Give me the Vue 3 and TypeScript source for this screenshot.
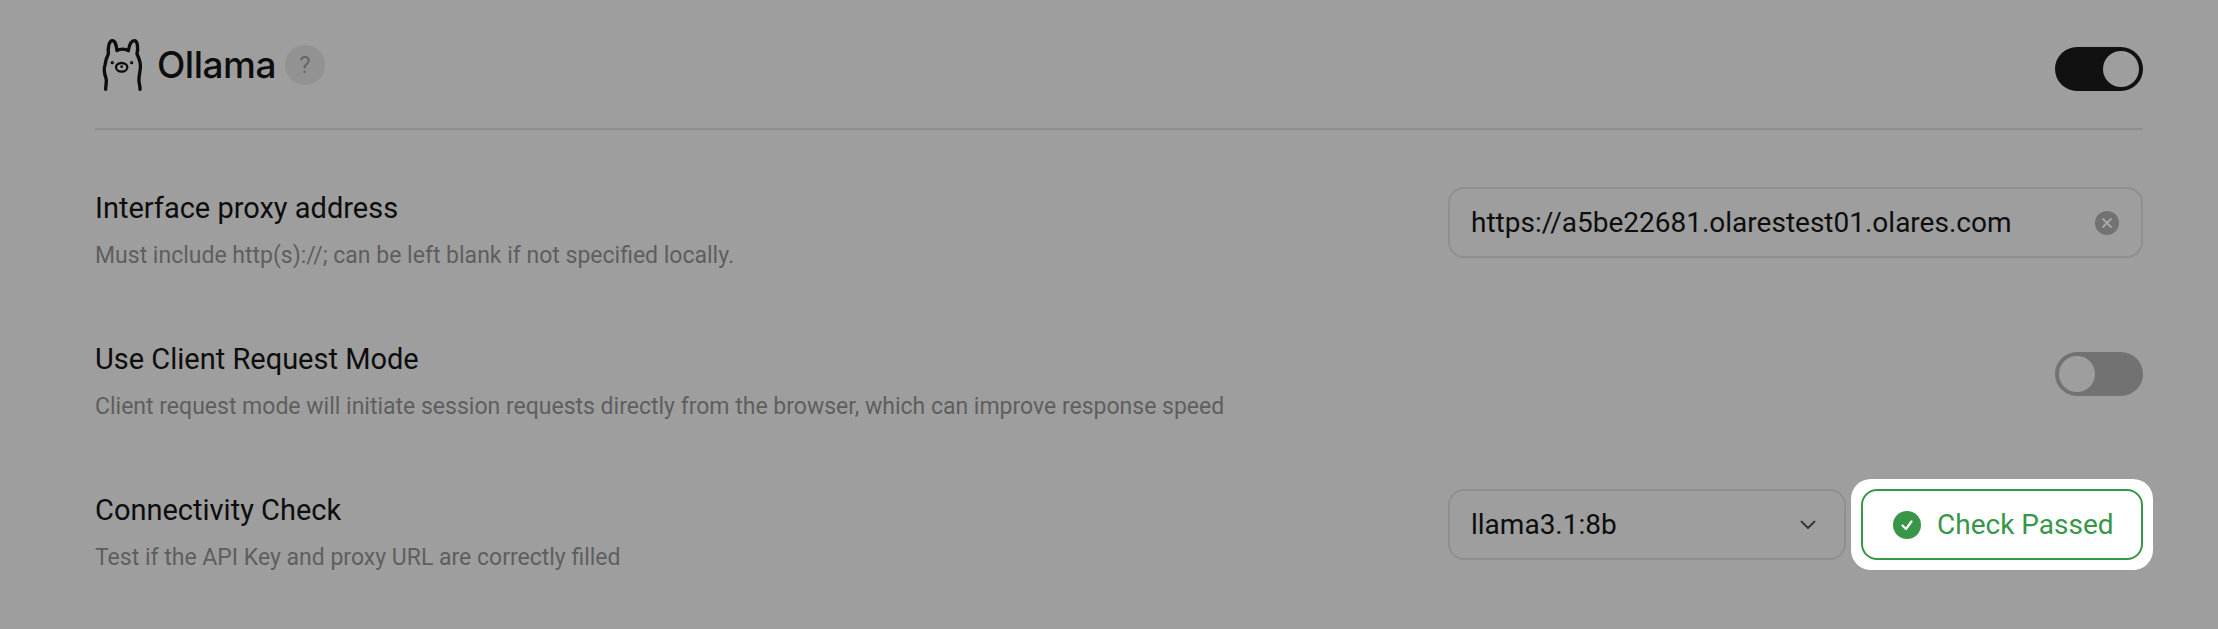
<template>
  <div class="settings">
    <header class="provider-header">
      <div class="provider-title">
        <svg class="llama" viewBox="0 0 180 210" fill="none" stroke="#0d0d0d" stroke-width="10" stroke-linecap="round" stroke-linejoin="round">
          <path d="M32 178C32 165 36 155 33 145C28 130 26 115 30 105C32 90 36 80 40 72C38 55 42 32 52 32C62 32 64 50 66 62C75 56 90 56 100 62C102 50 108 32 118 32C128 32 130 55 126 72C132 85 136 95 136 105C138 120 132 132 132 145C130 158 136 165 135 178" />
          <ellipse cx="80" cy="112" rx="17" ry="13" stroke-width="7" />
          <circle cx="80" cy="110" r="2" stroke-width="4" />
          <circle cx="52" cy="98" r="2" stroke-width="6" />
          <circle cx="110" cy="98" r="2" stroke-width="6" />
        </svg>
        <span class="provider-name">Ollama</span>
        <span class="help-badge">?</span>
      </div>
      <button class="switch on" type="button"><span class="knob"></span></button>
    </header>

    <section class="row">
      <div class="row-text">
        <div class="row-label">Interface proxy address</div>
        <div class="row-desc">Must include http(s)://; can be left blank if not specified locally.</div>
      </div>
      <div class="row-control">
        <div class="field wide">
          <span class="field-value">{{ proxyUrl }}</span>
          <svg class="clear-icon" viewBox="0 0 24 24">
            <circle cx="12" cy="12" r="12" fill="#727272" />
            <path d="M8 8l8 8M16 8l-8 8" stroke="#a8a8a8" stroke-width="1.8" stroke-linecap="round" />
          </svg>
        </div>
      </div>
    </section>

    <section class="row">
      <div class="row-text">
        <div class="row-label">Use Client Request Mode</div>
        <div class="row-desc">Client request mode will initiate session requests directly from the browser, which can improve response speed</div>
      </div>
      <div class="row-control">
        <button class="switch off" type="button"><span class="knob"></span></button>
      </div>
    </section>

    <section class="row">
      <div class="row-text">
        <div class="row-label">Connectivity Check</div>
        <div class="row-desc">Test if the API Key and proxy URL are correctly filled</div>
      </div>
      <div class="row-control">
        <div class="field model">
          <span class="field-value">{{ model }}</span>
          <svg class="chevron" viewBox="0 0 16 10" fill="none" stroke="#333" stroke-width="1.8" stroke-linecap="round" stroke-linejoin="round">
            <path d="M1.5 1.5L8 8l6.5-6.5" />
          </svg>
        </div>
        <div class="spotlight">
          <button class="check-btn" type="button">
            <svg class="check-icon" viewBox="0 0 28 28">
              <circle cx="14" cy="14" r="14" fill="#389648" />
              <path d="M9.5 14.5l3.5 3.5 5.5-7.5" fill="none" stroke="#fff" stroke-width="2.2" stroke-linecap="round" stroke-linejoin="round" />
            </svg>
            <span>Check Passed</span>
          </button>
        </div>
      </div>
    </section>
  </div>
</template>

<script setup lang="ts">
const proxyUrl = 'https://a5be22681.olarestest01.olares.com'
const model = 'llama3.1:8b'
</script>

<style>
html,
body {
  margin: 0;
  background: #9e9e9e;
}
</style>

<style scoped>
.settings {
  box-sizing: border-box;
  width: 2218px;
  height: 629px;
  padding: 0 75px 0 95px;
  background: #9e9e9e;
  font-family: Roboto, "Noto Sans", sans-serif;
  color: #0d0d0d;
  overflow: hidden;
}

.provider-header {
  display: flex;
  justify-content: space-between;
  align-items: flex-start;
  height: 128px;
  margin-bottom: 17px;
  border-bottom: 2px solid #8f8f8f;
}

.provider-title {
  display: flex;
  align-items: center;
  height: 70px;
  margin-top: 30px;
}

.llama {
  width: 60px;
  height: 70px;
}

.provider-name {
  margin: 0 0 1px 2px;
  font-family: Inter, sans-serif;
  font-size: 37px;
  font-weight: 500;
  letter-spacing: -0.5px;
}

.help-badge {
  display: flex;
  align-items: center;
  justify-content: center;
  width: 40px;
  height: 40px;
  margin: 0 0 1px 9px;
  border-radius: 50%;
  background: #929292;
  color: #666;
  font-size: 24px;
}

.switch {
  box-sizing: border-box;
  display: flex;
  align-items: center;
  width: 88px;
  height: 44px;
  padding: 0 4px;
  border: 0;
  border-radius: 22px;
}

.provider-header .switch {
  margin-top: 47px;
}

.switch.on {
  justify-content: flex-end;
  background: #111;
}

.switch.off {
  background: #727272;
}

.knob {
  width: 36px;
  height: 36px;
  border-radius: 50%;
  background: #9e9e9e;
}

.row {
  display: flex;
  justify-content: space-between;
  align-items: flex-start;
  height: 71px;
  padding: 40px 0;
}

.row-label {
  font-size: 29px;
  font-weight: 400;
  line-height: 43px;
}

.row-desc {
  margin-top: 8px;
  color: #5e5e5e;
  font-size: 23px;
  line-height: 36px;
}

.row-control {
  display: flex;
  align-items: center;
  height: 71px;
}

.field {
  box-sizing: border-box;
  display: flex;
  align-items: center;
  justify-content: space-between;
  height: 71px;
  padding: 0 22px 0 21px;
  border: 2px solid #8f8f8f;
  border-radius: 16px;
  font-size: 28px;
}

.field.wide {
  width: 695px;
}

.field.model {
  width: 398px;
  padding-right: 28px;
}

.clear-icon {
  width: 24px;
  height: 24px;
}

.chevron {
  width: 16px;
  height: 10px;
}

.spotlight {
  margin: 0 -10px 0 5px;
  padding: 10px;
  border-radius: 20px;
  background: #fff;
}

.check-btn {
  box-sizing: border-box;
  display: flex;
  align-items: center;
  gap: 16px;
  width: 282px;
  height: 71px;
  padding: 0 0 0 30px;
  border: 2px solid #389648;
  border-radius: 16px;
  background: #fff;
  color: #389648;
  font-family: inherit;
  font-size: 28px;
}

.check-icon {
  flex: none;
  width: 28px;
  height: 28px;
}
</style>
